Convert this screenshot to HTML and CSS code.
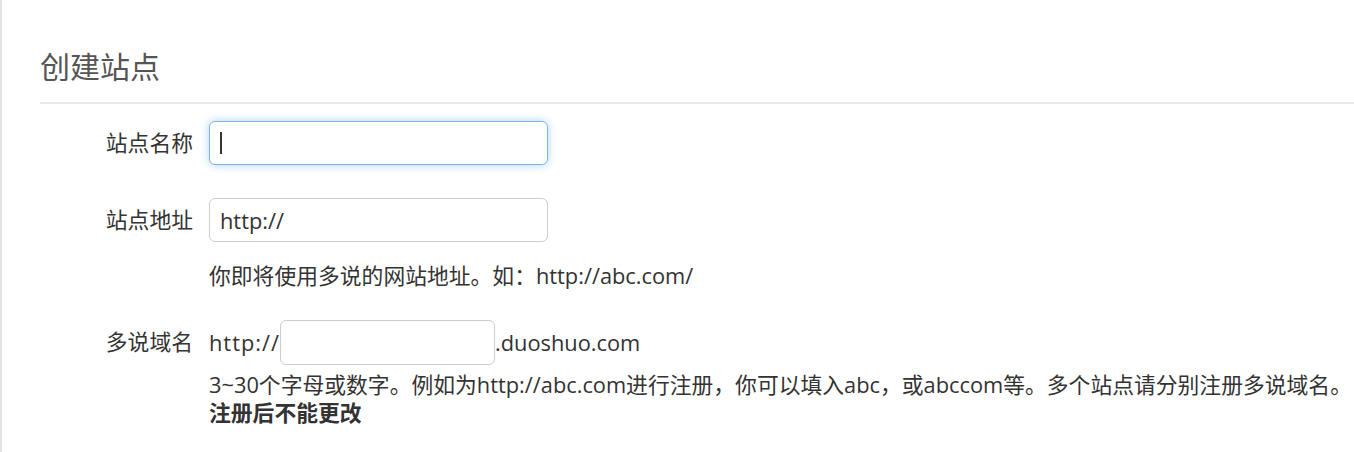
FILE: index.html
```html
<!DOCTYPE html>
<html lang="zh-CN">
<head>
<meta charset="utf-8">
<title>创建站点</title>
<link rel="stylesheet" href="styles.css">
</head>
<body>
<div class="page">
  <h2 class="title">创建站点</h2>
  <form class="form">
    <div class="row">
      <label class="label">站点名称</label>
      <div class="field">
        <div class="input input-focus"><span class="caret"></span></div>
      </div>
    </div>
    <div class="row row-url">
      <label class="label">站点地址</label>
      <div class="field">
        <div class="input"><span class="value">http://</span></div>
        <p class="help">你即将使用多说的网站地址。如：http://abc.com/</p>
      </div>
    </div>
    <div class="row row-domain">
      <label class="label">多说域名</label>
      <div class="field">
        <div class="inline">
          <span class="affix affix-pre">http://</span>
          <div class="input input-short"></div>
          <span class="affix">.duoshuo.com</span>
        </div>
        <p class="help help-tight"><span class="nowrap">3~30个字母或数字。例如为http://abc.com进行注册，你可以填入abc，或abccom等。多个站点请分别注册多说域名。</span><br><strong>注册后不能更改</strong></p>
      </div>
    </div>
  </form>
</div>
</body>
</html>
```

FILE: styles.css
```css
* { box-sizing: border-box; }
html, body { margin: 0; padding: 0; background: #fff; }
body {
  font-family: "Open Sans", "Noto Sans CJK SC", sans-serif;
  color: #333;
  font-size: 21.8px;
}
.page {
  border-left: 2px solid #e2e2e2;
  height: 452px;
  padding-left: 38px;
  overflow: hidden;
}
.title {
  margin: 0;
  padding-top: 45px;
  font-size: 30px;
  font-weight: normal;
  color: #555;
  line-height: 40px;
  padding-bottom: 17px;
  border-bottom: 2px solid #e8e8e8;
  font-family: "Noto Sans CJK SC", sans-serif;
}
.form { padding-top: 17px; }
.row {
  display: flex;
  align-items: flex-start;
}
.label {
  width: 169px;
  text-align: right;
  padding-right: 16px;
  line-height: 44px;
  color: #333;
  flex: none;
}
.field { flex: 1; min-width: 0; }
.input {
  width: 339px;
  height: 44px;
  border: 1px solid #ccc;
  border-radius: 6px;
  background: #fff;
  display: flex;
  align-items: center;
  padding-left: 10px;
}
.input-focus {
  border-color: #7fb4ea;
  box-shadow: 0 0 8px rgba(102, 175, 233, 0.55);
}
.caret {
  display: block;
  width: 2px;
  height: 22px;
  background: #333;
}
.value { color: #333; }
.row-url { margin-top: 33px; }
.help {
  margin: 0;
  line-height: 28px;
  padding-top: 20px;
}
.row-domain { margin-top: 30px; }
.inline {
  display: flex;
  align-items: center;
  height: 45px;
}
.affix-pre { letter-spacing: 1px; margin-right: 0; }
.input-short { width: 215px; height: 45px; }
.help-tight { padding-top: 0; margin-top: 6px; }
.nowrap { white-space: nowrap; }
.help strong { font-weight: bold; }
```
